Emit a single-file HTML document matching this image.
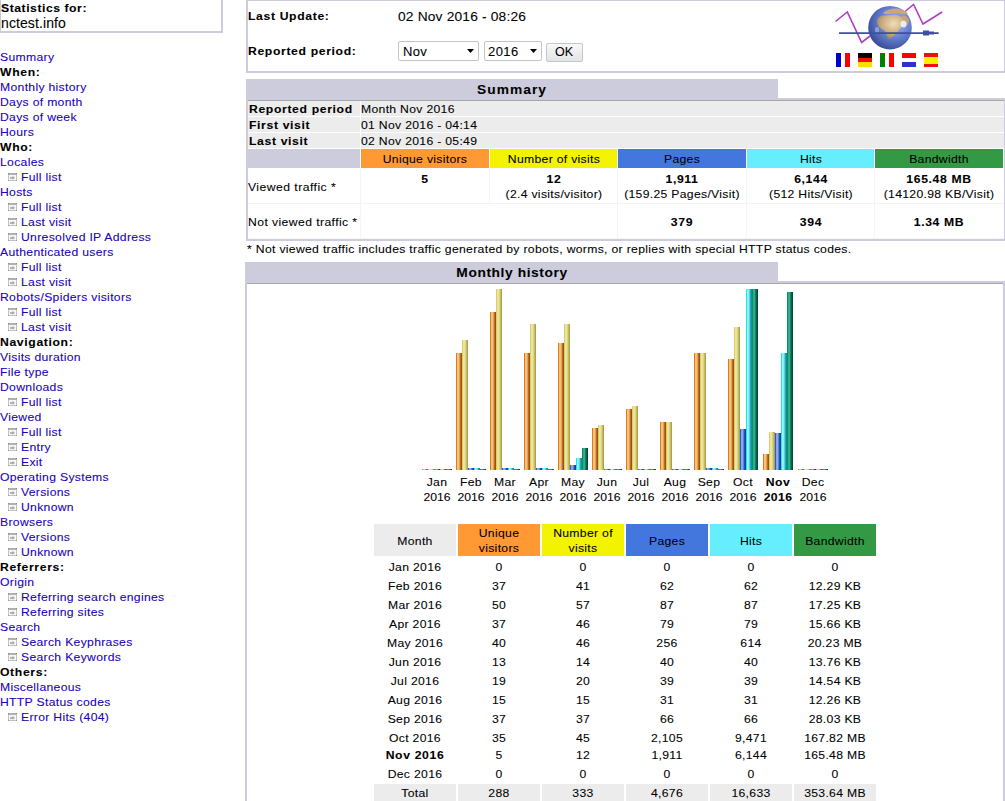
<!DOCTYPE html>
<html><head><meta charset="utf-8"><title>AWStats - nctest.info</title>
<style>
html,body{margin:0;padding:0;background:#fff;width:1005px;height:801px;overflow:hidden;position:relative}
.t{position:absolute;font-family:"Liberation Sans",sans-serif;white-space:nowrap;-webkit-text-stroke:0.08px currentColor}
.r{position:absolute}
.sel{border:1px solid #C4C4C4;border-radius:2px;background:#fff}
.btn{border:1px solid #C0C8D0;border-radius:2px;background:linear-gradient(#F8F8F8,#E4E4E4)}
</style></head><body>
<div class="r" style="left:0px;top:0px;width:1px;height:33px;background:#CCCCDD;"></div>
<div class="r" style="left:221px;top:0px;width:2px;height:33px;background:#CCCCDD;"></div>
<div class="r" style="left:0px;top:31px;width:223px;height:2px;background:#CCCCDD;"></div>
<div class="t" style="left:1px;top:3px;font-size:11.5px;line-height:11.5px;letter-spacing:0.509px;color:#000;font-weight:bold;transform:scaleX(1.06);transform-origin:0 0;">Statistics for:</div>
<div class="t" style="left:1px;top:16px;font-size:14px;line-height:14px;letter-spacing:0.100px;color:#000;">nctest.info</div>
<div class="t" style="left:0px;top:52px;font-size:11.5px;line-height:11.5px;letter-spacing:0.288px;color:#2000BB;transform:scaleX(1.06);transform-origin:0 0;">Summary</div>
<div class="t" style="left:0px;top:67px;font-size:11.5px;line-height:11.5px;letter-spacing:0.603px;color:#000;font-weight:bold;transform:scaleX(1.06);transform-origin:0 0;">When:</div>
<div class="t" style="left:0px;top:82px;font-size:11.5px;line-height:11.5px;letter-spacing:0.288px;color:#2000BB;transform:scaleX(1.06);transform-origin:0 0;">Monthly history</div>
<div class="t" style="left:0px;top:97px;font-size:11.5px;line-height:11.5px;letter-spacing:0.288px;color:#2000BB;transform:scaleX(1.06);transform-origin:0 0;">Days of month</div>
<div class="t" style="left:0px;top:112px;font-size:11.5px;line-height:11.5px;letter-spacing:0.288px;color:#2000BB;transform:scaleX(1.06);transform-origin:0 0;">Days of week</div>
<div class="t" style="left:0px;top:127px;font-size:11.5px;line-height:11.5px;letter-spacing:0.288px;color:#2000BB;transform:scaleX(1.06);transform-origin:0 0;">Hours</div>
<div class="t" style="left:0px;top:142px;font-size:11.5px;line-height:11.5px;letter-spacing:0.603px;color:#000;font-weight:bold;transform:scaleX(1.06);transform-origin:0 0;">Who:</div>
<div class="t" style="left:0px;top:157px;font-size:11.5px;line-height:11.5px;letter-spacing:0.288px;color:#2000BB;transform:scaleX(1.06);transform-origin:0 0;">Locales</div>
<svg class="r" style="left:8px;top:173px" width="9" height="8" viewBox="0 0 9 8"><rect x="0" y="0" width="9" height="8" fill="#C2C2C2"/><rect x="1" y="2" width="7" height="5" fill="#F8F8F8"/><rect x="0" y="0" width="9" height="2" fill="#B0B0B0"/><rect x="0" y="0" width="1" height="1" fill="#8C8C8C"/><rect x="8" y="0" width="1" height="1" fill="#8C8C8C"/><rect x="0" y="7" width="1" height="1" fill="#9C9C9C"/><rect x="8" y="7" width="1" height="1" fill="#9C9C9C"/><rect x="2" y="4" width="3" height="2" fill="#B4B4B4"/><path d="M4.5,2.8 L7,5 L4.5,6.8 Z" fill="#A8A8A8"/></svg>
<div class="t" style="left:21px;top:172px;font-size:11.5px;line-height:11.5px;letter-spacing:0.288px;color:#2000BB;transform:scaleX(1.06);transform-origin:0 0;">Full list</div>
<div class="t" style="left:0px;top:187px;font-size:11.5px;line-height:11.5px;letter-spacing:0.288px;color:#2000BB;transform:scaleX(1.06);transform-origin:0 0;">Hosts</div>
<svg class="r" style="left:8px;top:203px" width="9" height="8" viewBox="0 0 9 8"><rect x="0" y="0" width="9" height="8" fill="#C2C2C2"/><rect x="1" y="2" width="7" height="5" fill="#F8F8F8"/><rect x="0" y="0" width="9" height="2" fill="#B0B0B0"/><rect x="0" y="0" width="1" height="1" fill="#8C8C8C"/><rect x="8" y="0" width="1" height="1" fill="#8C8C8C"/><rect x="0" y="7" width="1" height="1" fill="#9C9C9C"/><rect x="8" y="7" width="1" height="1" fill="#9C9C9C"/><rect x="2" y="4" width="3" height="2" fill="#B4B4B4"/><path d="M4.5,2.8 L7,5 L4.5,6.8 Z" fill="#A8A8A8"/></svg>
<div class="t" style="left:21px;top:202px;font-size:11.5px;line-height:11.5px;letter-spacing:0.288px;color:#2000BB;transform:scaleX(1.06);transform-origin:0 0;">Full list</div>
<svg class="r" style="left:8px;top:218px" width="9" height="8" viewBox="0 0 9 8"><rect x="0" y="0" width="9" height="8" fill="#C2C2C2"/><rect x="1" y="2" width="7" height="5" fill="#F8F8F8"/><rect x="0" y="0" width="9" height="2" fill="#B0B0B0"/><rect x="0" y="0" width="1" height="1" fill="#8C8C8C"/><rect x="8" y="0" width="1" height="1" fill="#8C8C8C"/><rect x="0" y="7" width="1" height="1" fill="#9C9C9C"/><rect x="8" y="7" width="1" height="1" fill="#9C9C9C"/><rect x="2" y="4" width="3" height="2" fill="#B4B4B4"/><path d="M4.5,2.8 L7,5 L4.5,6.8 Z" fill="#A8A8A8"/></svg>
<div class="t" style="left:21px;top:217px;font-size:11.5px;line-height:11.5px;letter-spacing:0.288px;color:#2000BB;transform:scaleX(1.06);transform-origin:0 0;">Last visit</div>
<svg class="r" style="left:8px;top:233px" width="9" height="8" viewBox="0 0 9 8"><rect x="0" y="0" width="9" height="8" fill="#C2C2C2"/><rect x="1" y="2" width="7" height="5" fill="#F8F8F8"/><rect x="0" y="0" width="9" height="2" fill="#B0B0B0"/><rect x="0" y="0" width="1" height="1" fill="#8C8C8C"/><rect x="8" y="0" width="1" height="1" fill="#8C8C8C"/><rect x="0" y="7" width="1" height="1" fill="#9C9C9C"/><rect x="8" y="7" width="1" height="1" fill="#9C9C9C"/><rect x="2" y="4" width="3" height="2" fill="#B4B4B4"/><path d="M4.5,2.8 L7,5 L4.5,6.8 Z" fill="#A8A8A8"/></svg>
<div class="t" style="left:21px;top:232px;font-size:11.5px;line-height:11.5px;letter-spacing:0.288px;color:#2000BB;transform:scaleX(1.06);transform-origin:0 0;">Unresolved IP Address</div>
<div class="t" style="left:0px;top:247px;font-size:11.5px;line-height:11.5px;letter-spacing:0.288px;color:#2000BB;transform:scaleX(1.06);transform-origin:0 0;">Authenticated users</div>
<svg class="r" style="left:8px;top:263px" width="9" height="8" viewBox="0 0 9 8"><rect x="0" y="0" width="9" height="8" fill="#C2C2C2"/><rect x="1" y="2" width="7" height="5" fill="#F8F8F8"/><rect x="0" y="0" width="9" height="2" fill="#B0B0B0"/><rect x="0" y="0" width="1" height="1" fill="#8C8C8C"/><rect x="8" y="0" width="1" height="1" fill="#8C8C8C"/><rect x="0" y="7" width="1" height="1" fill="#9C9C9C"/><rect x="8" y="7" width="1" height="1" fill="#9C9C9C"/><rect x="2" y="4" width="3" height="2" fill="#B4B4B4"/><path d="M4.5,2.8 L7,5 L4.5,6.8 Z" fill="#A8A8A8"/></svg>
<div class="t" style="left:21px;top:262px;font-size:11.5px;line-height:11.5px;letter-spacing:0.288px;color:#2000BB;transform:scaleX(1.06);transform-origin:0 0;">Full list</div>
<svg class="r" style="left:8px;top:278px" width="9" height="8" viewBox="0 0 9 8"><rect x="0" y="0" width="9" height="8" fill="#C2C2C2"/><rect x="1" y="2" width="7" height="5" fill="#F8F8F8"/><rect x="0" y="0" width="9" height="2" fill="#B0B0B0"/><rect x="0" y="0" width="1" height="1" fill="#8C8C8C"/><rect x="8" y="0" width="1" height="1" fill="#8C8C8C"/><rect x="0" y="7" width="1" height="1" fill="#9C9C9C"/><rect x="8" y="7" width="1" height="1" fill="#9C9C9C"/><rect x="2" y="4" width="3" height="2" fill="#B4B4B4"/><path d="M4.5,2.8 L7,5 L4.5,6.8 Z" fill="#A8A8A8"/></svg>
<div class="t" style="left:21px;top:277px;font-size:11.5px;line-height:11.5px;letter-spacing:0.288px;color:#2000BB;transform:scaleX(1.06);transform-origin:0 0;">Last visit</div>
<div class="t" style="left:0px;top:292px;font-size:11.5px;line-height:11.5px;letter-spacing:0.288px;color:#2000BB;transform:scaleX(1.06);transform-origin:0 0;">Robots/Spiders visitors</div>
<svg class="r" style="left:8px;top:308px" width="9" height="8" viewBox="0 0 9 8"><rect x="0" y="0" width="9" height="8" fill="#C2C2C2"/><rect x="1" y="2" width="7" height="5" fill="#F8F8F8"/><rect x="0" y="0" width="9" height="2" fill="#B0B0B0"/><rect x="0" y="0" width="1" height="1" fill="#8C8C8C"/><rect x="8" y="0" width="1" height="1" fill="#8C8C8C"/><rect x="0" y="7" width="1" height="1" fill="#9C9C9C"/><rect x="8" y="7" width="1" height="1" fill="#9C9C9C"/><rect x="2" y="4" width="3" height="2" fill="#B4B4B4"/><path d="M4.5,2.8 L7,5 L4.5,6.8 Z" fill="#A8A8A8"/></svg>
<div class="t" style="left:21px;top:307px;font-size:11.5px;line-height:11.5px;letter-spacing:0.288px;color:#2000BB;transform:scaleX(1.06);transform-origin:0 0;">Full list</div>
<svg class="r" style="left:8px;top:323px" width="9" height="8" viewBox="0 0 9 8"><rect x="0" y="0" width="9" height="8" fill="#C2C2C2"/><rect x="1" y="2" width="7" height="5" fill="#F8F8F8"/><rect x="0" y="0" width="9" height="2" fill="#B0B0B0"/><rect x="0" y="0" width="1" height="1" fill="#8C8C8C"/><rect x="8" y="0" width="1" height="1" fill="#8C8C8C"/><rect x="0" y="7" width="1" height="1" fill="#9C9C9C"/><rect x="8" y="7" width="1" height="1" fill="#9C9C9C"/><rect x="2" y="4" width="3" height="2" fill="#B4B4B4"/><path d="M4.5,2.8 L7,5 L4.5,6.8 Z" fill="#A8A8A8"/></svg>
<div class="t" style="left:21px;top:322px;font-size:11.5px;line-height:11.5px;letter-spacing:0.288px;color:#2000BB;transform:scaleX(1.06);transform-origin:0 0;">Last visit</div>
<div class="t" style="left:0px;top:337px;font-size:11.5px;line-height:11.5px;letter-spacing:0.603px;color:#000;font-weight:bold;transform:scaleX(1.06);transform-origin:0 0;">Navigation:</div>
<div class="t" style="left:0px;top:352px;font-size:11.5px;line-height:11.5px;letter-spacing:0.288px;color:#2000BB;transform:scaleX(1.06);transform-origin:0 0;">Visits duration</div>
<div class="t" style="left:0px;top:367px;font-size:11.5px;line-height:11.5px;letter-spacing:0.288px;color:#2000BB;transform:scaleX(1.06);transform-origin:0 0;">File type</div>
<div class="t" style="left:0px;top:382px;font-size:11.5px;line-height:11.5px;letter-spacing:0.288px;color:#2000BB;transform:scaleX(1.06);transform-origin:0 0;">Downloads</div>
<svg class="r" style="left:8px;top:398px" width="9" height="8" viewBox="0 0 9 8"><rect x="0" y="0" width="9" height="8" fill="#C2C2C2"/><rect x="1" y="2" width="7" height="5" fill="#F8F8F8"/><rect x="0" y="0" width="9" height="2" fill="#B0B0B0"/><rect x="0" y="0" width="1" height="1" fill="#8C8C8C"/><rect x="8" y="0" width="1" height="1" fill="#8C8C8C"/><rect x="0" y="7" width="1" height="1" fill="#9C9C9C"/><rect x="8" y="7" width="1" height="1" fill="#9C9C9C"/><rect x="2" y="4" width="3" height="2" fill="#B4B4B4"/><path d="M4.5,2.8 L7,5 L4.5,6.8 Z" fill="#A8A8A8"/></svg>
<div class="t" style="left:21px;top:397px;font-size:11.5px;line-height:11.5px;letter-spacing:0.288px;color:#2000BB;transform:scaleX(1.06);transform-origin:0 0;">Full list</div>
<div class="t" style="left:0px;top:412px;font-size:11.5px;line-height:11.5px;letter-spacing:0.288px;color:#2000BB;transform:scaleX(1.06);transform-origin:0 0;">Viewed</div>
<svg class="r" style="left:8px;top:428px" width="9" height="8" viewBox="0 0 9 8"><rect x="0" y="0" width="9" height="8" fill="#C2C2C2"/><rect x="1" y="2" width="7" height="5" fill="#F8F8F8"/><rect x="0" y="0" width="9" height="2" fill="#B0B0B0"/><rect x="0" y="0" width="1" height="1" fill="#8C8C8C"/><rect x="8" y="0" width="1" height="1" fill="#8C8C8C"/><rect x="0" y="7" width="1" height="1" fill="#9C9C9C"/><rect x="8" y="7" width="1" height="1" fill="#9C9C9C"/><rect x="2" y="4" width="3" height="2" fill="#B4B4B4"/><path d="M4.5,2.8 L7,5 L4.5,6.8 Z" fill="#A8A8A8"/></svg>
<div class="t" style="left:21px;top:427px;font-size:11.5px;line-height:11.5px;letter-spacing:0.288px;color:#2000BB;transform:scaleX(1.06);transform-origin:0 0;">Full list</div>
<svg class="r" style="left:8px;top:443px" width="9" height="8" viewBox="0 0 9 8"><rect x="0" y="0" width="9" height="8" fill="#C2C2C2"/><rect x="1" y="2" width="7" height="5" fill="#F8F8F8"/><rect x="0" y="0" width="9" height="2" fill="#B0B0B0"/><rect x="0" y="0" width="1" height="1" fill="#8C8C8C"/><rect x="8" y="0" width="1" height="1" fill="#8C8C8C"/><rect x="0" y="7" width="1" height="1" fill="#9C9C9C"/><rect x="8" y="7" width="1" height="1" fill="#9C9C9C"/><rect x="2" y="4" width="3" height="2" fill="#B4B4B4"/><path d="M4.5,2.8 L7,5 L4.5,6.8 Z" fill="#A8A8A8"/></svg>
<div class="t" style="left:21px;top:442px;font-size:11.5px;line-height:11.5px;letter-spacing:0.288px;color:#2000BB;transform:scaleX(1.06);transform-origin:0 0;">Entry</div>
<svg class="r" style="left:8px;top:458px" width="9" height="8" viewBox="0 0 9 8"><rect x="0" y="0" width="9" height="8" fill="#C2C2C2"/><rect x="1" y="2" width="7" height="5" fill="#F8F8F8"/><rect x="0" y="0" width="9" height="2" fill="#B0B0B0"/><rect x="0" y="0" width="1" height="1" fill="#8C8C8C"/><rect x="8" y="0" width="1" height="1" fill="#8C8C8C"/><rect x="0" y="7" width="1" height="1" fill="#9C9C9C"/><rect x="8" y="7" width="1" height="1" fill="#9C9C9C"/><rect x="2" y="4" width="3" height="2" fill="#B4B4B4"/><path d="M4.5,2.8 L7,5 L4.5,6.8 Z" fill="#A8A8A8"/></svg>
<div class="t" style="left:21px;top:457px;font-size:11.5px;line-height:11.5px;letter-spacing:0.288px;color:#2000BB;transform:scaleX(1.06);transform-origin:0 0;">Exit</div>
<div class="t" style="left:0px;top:472px;font-size:11.5px;line-height:11.5px;letter-spacing:0.288px;color:#2000BB;transform:scaleX(1.06);transform-origin:0 0;">Operating Systems</div>
<svg class="r" style="left:8px;top:488px" width="9" height="8" viewBox="0 0 9 8"><rect x="0" y="0" width="9" height="8" fill="#C2C2C2"/><rect x="1" y="2" width="7" height="5" fill="#F8F8F8"/><rect x="0" y="0" width="9" height="2" fill="#B0B0B0"/><rect x="0" y="0" width="1" height="1" fill="#8C8C8C"/><rect x="8" y="0" width="1" height="1" fill="#8C8C8C"/><rect x="0" y="7" width="1" height="1" fill="#9C9C9C"/><rect x="8" y="7" width="1" height="1" fill="#9C9C9C"/><rect x="2" y="4" width="3" height="2" fill="#B4B4B4"/><path d="M4.5,2.8 L7,5 L4.5,6.8 Z" fill="#A8A8A8"/></svg>
<div class="t" style="left:21px;top:487px;font-size:11.5px;line-height:11.5px;letter-spacing:0.288px;color:#2000BB;transform:scaleX(1.06);transform-origin:0 0;">Versions</div>
<svg class="r" style="left:8px;top:503px" width="9" height="8" viewBox="0 0 9 8"><rect x="0" y="0" width="9" height="8" fill="#C2C2C2"/><rect x="1" y="2" width="7" height="5" fill="#F8F8F8"/><rect x="0" y="0" width="9" height="2" fill="#B0B0B0"/><rect x="0" y="0" width="1" height="1" fill="#8C8C8C"/><rect x="8" y="0" width="1" height="1" fill="#8C8C8C"/><rect x="0" y="7" width="1" height="1" fill="#9C9C9C"/><rect x="8" y="7" width="1" height="1" fill="#9C9C9C"/><rect x="2" y="4" width="3" height="2" fill="#B4B4B4"/><path d="M4.5,2.8 L7,5 L4.5,6.8 Z" fill="#A8A8A8"/></svg>
<div class="t" style="left:21px;top:502px;font-size:11.5px;line-height:11.5px;letter-spacing:0.288px;color:#2000BB;transform:scaleX(1.06);transform-origin:0 0;">Unknown</div>
<div class="t" style="left:0px;top:517px;font-size:11.5px;line-height:11.5px;letter-spacing:0.288px;color:#2000BB;transform:scaleX(1.06);transform-origin:0 0;">Browsers</div>
<svg class="r" style="left:8px;top:533px" width="9" height="8" viewBox="0 0 9 8"><rect x="0" y="0" width="9" height="8" fill="#C2C2C2"/><rect x="1" y="2" width="7" height="5" fill="#F8F8F8"/><rect x="0" y="0" width="9" height="2" fill="#B0B0B0"/><rect x="0" y="0" width="1" height="1" fill="#8C8C8C"/><rect x="8" y="0" width="1" height="1" fill="#8C8C8C"/><rect x="0" y="7" width="1" height="1" fill="#9C9C9C"/><rect x="8" y="7" width="1" height="1" fill="#9C9C9C"/><rect x="2" y="4" width="3" height="2" fill="#B4B4B4"/><path d="M4.5,2.8 L7,5 L4.5,6.8 Z" fill="#A8A8A8"/></svg>
<div class="t" style="left:21px;top:532px;font-size:11.5px;line-height:11.5px;letter-spacing:0.288px;color:#2000BB;transform:scaleX(1.06);transform-origin:0 0;">Versions</div>
<svg class="r" style="left:8px;top:548px" width="9" height="8" viewBox="0 0 9 8"><rect x="0" y="0" width="9" height="8" fill="#C2C2C2"/><rect x="1" y="2" width="7" height="5" fill="#F8F8F8"/><rect x="0" y="0" width="9" height="2" fill="#B0B0B0"/><rect x="0" y="0" width="1" height="1" fill="#8C8C8C"/><rect x="8" y="0" width="1" height="1" fill="#8C8C8C"/><rect x="0" y="7" width="1" height="1" fill="#9C9C9C"/><rect x="8" y="7" width="1" height="1" fill="#9C9C9C"/><rect x="2" y="4" width="3" height="2" fill="#B4B4B4"/><path d="M4.5,2.8 L7,5 L4.5,6.8 Z" fill="#A8A8A8"/></svg>
<div class="t" style="left:21px;top:547px;font-size:11.5px;line-height:11.5px;letter-spacing:0.288px;color:#2000BB;transform:scaleX(1.06);transform-origin:0 0;">Unknown</div>
<div class="t" style="left:0px;top:562px;font-size:11.5px;line-height:11.5px;letter-spacing:0.603px;color:#000;font-weight:bold;transform:scaleX(1.06);transform-origin:0 0;">Referrers:</div>
<div class="t" style="left:0px;top:577px;font-size:11.5px;line-height:11.5px;letter-spacing:0.288px;color:#2000BB;transform:scaleX(1.06);transform-origin:0 0;">Origin</div>
<svg class="r" style="left:8px;top:593px" width="9" height="8" viewBox="0 0 9 8"><rect x="0" y="0" width="9" height="8" fill="#C2C2C2"/><rect x="1" y="2" width="7" height="5" fill="#F8F8F8"/><rect x="0" y="0" width="9" height="2" fill="#B0B0B0"/><rect x="0" y="0" width="1" height="1" fill="#8C8C8C"/><rect x="8" y="0" width="1" height="1" fill="#8C8C8C"/><rect x="0" y="7" width="1" height="1" fill="#9C9C9C"/><rect x="8" y="7" width="1" height="1" fill="#9C9C9C"/><rect x="2" y="4" width="3" height="2" fill="#B4B4B4"/><path d="M4.5,2.8 L7,5 L4.5,6.8 Z" fill="#A8A8A8"/></svg>
<div class="t" style="left:21px;top:592px;font-size:11.5px;line-height:11.5px;letter-spacing:0.288px;color:#2000BB;transform:scaleX(1.06);transform-origin:0 0;">Referring search engines</div>
<svg class="r" style="left:8px;top:608px" width="9" height="8" viewBox="0 0 9 8"><rect x="0" y="0" width="9" height="8" fill="#C2C2C2"/><rect x="1" y="2" width="7" height="5" fill="#F8F8F8"/><rect x="0" y="0" width="9" height="2" fill="#B0B0B0"/><rect x="0" y="0" width="1" height="1" fill="#8C8C8C"/><rect x="8" y="0" width="1" height="1" fill="#8C8C8C"/><rect x="0" y="7" width="1" height="1" fill="#9C9C9C"/><rect x="8" y="7" width="1" height="1" fill="#9C9C9C"/><rect x="2" y="4" width="3" height="2" fill="#B4B4B4"/><path d="M4.5,2.8 L7,5 L4.5,6.8 Z" fill="#A8A8A8"/></svg>
<div class="t" style="left:21px;top:607px;font-size:11.5px;line-height:11.5px;letter-spacing:0.288px;color:#2000BB;transform:scaleX(1.06);transform-origin:0 0;">Referring sites</div>
<div class="t" style="left:0px;top:622px;font-size:11.5px;line-height:11.5px;letter-spacing:0.288px;color:#2000BB;transform:scaleX(1.06);transform-origin:0 0;">Search</div>
<svg class="r" style="left:8px;top:638px" width="9" height="8" viewBox="0 0 9 8"><rect x="0" y="0" width="9" height="8" fill="#C2C2C2"/><rect x="1" y="2" width="7" height="5" fill="#F8F8F8"/><rect x="0" y="0" width="9" height="2" fill="#B0B0B0"/><rect x="0" y="0" width="1" height="1" fill="#8C8C8C"/><rect x="8" y="0" width="1" height="1" fill="#8C8C8C"/><rect x="0" y="7" width="1" height="1" fill="#9C9C9C"/><rect x="8" y="7" width="1" height="1" fill="#9C9C9C"/><rect x="2" y="4" width="3" height="2" fill="#B4B4B4"/><path d="M4.5,2.8 L7,5 L4.5,6.8 Z" fill="#A8A8A8"/></svg>
<div class="t" style="left:21px;top:637px;font-size:11.5px;line-height:11.5px;letter-spacing:0.288px;color:#2000BB;transform:scaleX(1.06);transform-origin:0 0;">Search Keyphrases</div>
<svg class="r" style="left:8px;top:653px" width="9" height="8" viewBox="0 0 9 8"><rect x="0" y="0" width="9" height="8" fill="#C2C2C2"/><rect x="1" y="2" width="7" height="5" fill="#F8F8F8"/><rect x="0" y="0" width="9" height="2" fill="#B0B0B0"/><rect x="0" y="0" width="1" height="1" fill="#8C8C8C"/><rect x="8" y="0" width="1" height="1" fill="#8C8C8C"/><rect x="0" y="7" width="1" height="1" fill="#9C9C9C"/><rect x="8" y="7" width="1" height="1" fill="#9C9C9C"/><rect x="2" y="4" width="3" height="2" fill="#B4B4B4"/><path d="M4.5,2.8 L7,5 L4.5,6.8 Z" fill="#A8A8A8"/></svg>
<div class="t" style="left:21px;top:652px;font-size:11.5px;line-height:11.5px;letter-spacing:0.288px;color:#2000BB;transform:scaleX(1.06);transform-origin:0 0;">Search Keywords</div>
<div class="t" style="left:0px;top:667px;font-size:11.5px;line-height:11.5px;letter-spacing:0.603px;color:#000;font-weight:bold;transform:scaleX(1.06);transform-origin:0 0;">Others:</div>
<div class="t" style="left:0px;top:682px;font-size:11.5px;line-height:11.5px;letter-spacing:0.288px;color:#2000BB;transform:scaleX(1.06);transform-origin:0 0;">Miscellaneous</div>
<div class="t" style="left:0px;top:697px;font-size:11.5px;line-height:11.5px;letter-spacing:0.288px;color:#2000BB;transform:scaleX(1.06);transform-origin:0 0;">HTTP Status codes</div>
<svg class="r" style="left:8px;top:713px" width="9" height="8" viewBox="0 0 9 8"><rect x="0" y="0" width="9" height="8" fill="#C2C2C2"/><rect x="1" y="2" width="7" height="5" fill="#F8F8F8"/><rect x="0" y="0" width="9" height="2" fill="#B0B0B0"/><rect x="0" y="0" width="1" height="1" fill="#8C8C8C"/><rect x="8" y="0" width="1" height="1" fill="#8C8C8C"/><rect x="0" y="7" width="1" height="1" fill="#9C9C9C"/><rect x="8" y="7" width="1" height="1" fill="#9C9C9C"/><rect x="2" y="4" width="3" height="2" fill="#B4B4B4"/><path d="M4.5,2.8 L7,5 L4.5,6.8 Z" fill="#A8A8A8"/></svg>
<div class="t" style="left:21px;top:712px;font-size:11.5px;line-height:11.5px;letter-spacing:0.288px;color:#2000BB;transform:scaleX(1.06);transform-origin:0 0;">Error Hits (404)</div>
<div class="r" style="left:246px;top:0px;width:2px;height:73px;background:#CCCCDD;"></div>
<div class="r" style="left:246px;top:0px;width:760px;height:1px;background:#CCCCDD;"></div>
<div class="r" style="left:1004px;top:0px;width:2px;height:73px;background:#CCCCDD;"></div>
<div class="r" style="left:246px;top:71px;width:760px;height:2px;background:#CCCCDD;"></div>
<div class="t" style="left:248px;top:11px;font-size:11.5px;line-height:11.5px;letter-spacing:0.603px;color:#000;font-weight:bold;transform:scaleX(1.06);transform-origin:0 0;">Last Update:</div>
<div class="t" style="left:398px;top:10px;font-size:13px;line-height:13px;letter-spacing:0.160px;color:#000;transform:scaleX(1.06);transform-origin:0 0;">02 Nov 2016 - 08:26</div>
<div class="t" style="left:248px;top:46px;font-size:11.5px;line-height:11.5px;letter-spacing:0.603px;color:#000;font-weight:bold;transform:scaleX(1.06);transform-origin:0 0;">Reported period:</div>
<div class="r sel" style="left:398px;top:41px;width:79px;height:18px;"></div>
<div class="t" style="left:403px;top:45px;font-size:13px;line-height:13px;letter-spacing:0.300px;color:#000;">Nov</div>
<svg class="r" style="left:467px;top:49px" width="7" height="4"><path d="M0 0H7L3.5 4Z" fill="#000"/></svg>
<div class="r sel" style="left:484px;top:41px;width:56px;height:18px;"></div>
<div class="t" style="left:488px;top:45px;font-size:13px;line-height:13px;letter-spacing:0.450px;color:#000;">2016</div>
<svg class="r" style="left:530px;top:49px" width="7" height="4"><path d="M0 0H7L3.5 4Z" fill="#000"/></svg>
<div class="r btn" style="left:546px;top:43px;width:35px;height:17px;"></div>
<div class="t" style="left:544.0px;top:46px;font-size:12.5px;line-height:12.5px;letter-spacing:0.000px;color:#000;width:40px;text-align:center;">OK</div>
<svg class="r" style="left:830px;top:0px" width="120" height="72" viewBox="0 0 120 72">
<defs>
<radialGradient id="gl" cx="0.62" cy="0.38" r="0.7">
<stop offset="0" stop-color="#E8F0FF"/><stop offset="0.18" stop-color="#8FA8E8"/><stop offset="0.6" stop-color="#5A74C8"/><stop offset="1" stop-color="#34468F"/>
</radialGradient>
<radialGradient id="gl2" cx="0.55" cy="0.35" r="0.7">
<stop offset="0" stop-color="#F0DDB8"/><stop offset="0.6" stop-color="#C8A878"/><stop offset="1" stop-color="#907050"/>
</radialGradient>
</defs>
<polyline points="5.5,21.5 17.3,12 31.6,42.4 40,36" fill="none" stroke="#B040C0" stroke-width="1.6"/>
<polyline points="75,11.5 83.6,4.5 93,24 112.2,12" fill="none" stroke="#B040C0" stroke-width="1.6"/>
<circle cx="60" cy="27.7" r="21.8" fill="url(#gl)"/>
<path d="M47,22 C47,18 50,15.5 54,15.5 L66,15 C70,15.5 72,18 74,19 C77,20 78,22 76,24 C73,25 71,27 69,30 C67,33 64,36 59,40 C57,37 57,33 55,31 C52,29 48,28 47,22 Z" fill="url(#gl2)"/>
<path d="M53,13 C56,10 61,8.5 67,8.5 C72,9 76,11 78,14 L74,14.5 C70,13 64,13.5 58,14 C56,14 54,14 53,13 Z" fill="#C8A878"/>
<path d="M72,15.5 C75,15 78,17 79,20 C79,23 77,26 75,26 C73,24 72,19 72,15.5 Z" fill="#C4A47A"/>
<ellipse cx="73.5" cy="24" rx="3" ry="3.5" fill="#F4F8FF" opacity="0.85"/>
<ellipse cx="47" cy="30" rx="2" ry="3" fill="#A8B4D8" opacity="0.7"/>
<line x1="9" y1="33.1" x2="108.7" y2="33.1" stroke="#4050A0" stroke-width="1.6"/>
<rect x="93" y="30.5" width="6" height="5" fill="#4050A0"/>
<rect x="99" y="31.5" width="5" height="3" fill="#4050A0"/>
</svg>
<div class="r" style="left:836px;top:53px;width:5px;height:14px;background:#0000CC;"></div>
<div class="r" style="left:841px;top:53px;width:4px;height:14px;background:#FFFFFF;"></div>
<div class="r" style="left:845px;top:53px;width:5px;height:14px;background:#FF0000;"></div>
<div class="r" style="left:880px;top:53px;width:5px;height:14px;background:#008000;"></div>
<div class="r" style="left:885px;top:53px;width:4px;height:14px;background:#FFFFFF;"></div>
<div class="r" style="left:889px;top:53px;width:5px;height:14px;background:#FF0000;"></div>
<div class="r" style="left:858px;top:53px;width:14px;height:5px;background:#100000;"></div>
<div class="r" style="left:858px;top:58px;width:14px;height:5px;background:#EE1010;"></div>
<div class="r" style="left:858px;top:62px;width:14px;height:5px;background:#FFDD00;"></div>
<div class="r" style="left:902px;top:53px;width:14px;height:5px;background:#FF0000;"></div>
<div class="r" style="left:902px;top:58px;width:14px;height:4px;background:#FFFFFF;"></div>
<div class="r" style="left:902px;top:62px;width:14px;height:5px;background:#3030CC;"></div>
<div class="r" style="left:924px;top:53px;width:14px;height:4px;background:#EE1010;"></div>
<div class="r" style="left:924px;top:57px;width:14px;height:7px;background:#FFEE00;"></div>
<div class="r" style="left:924px;top:64px;width:14px;height:3px;background:#EE1010;"></div>
<div class="r" style="left:246px;top:79px;width:532px;height:162px;background:#CCCCDD;"></div>
<div class="r" style="left:246px;top:98px;width:760px;height:143px;background:#CCCCDD;"></div>
<div class="t" style="left:411.5px;top:83px;font-size:13px;line-height:13px;letter-spacing:0.950px;color:#000;font-weight:bold;width:200px;text-align:center;transform:scaleX(1.06);transform-origin:50% 0;">Summary</div>
<div class="r" style="left:248px;top:100px;width:756px;height:139px;background:#FFFFFF;"></div>
<div class="r" style="left:248px;top:100px;width:756px;height:1px;background:#A8A8A8;"></div>
<div class="r" style="left:248px;top:101px;width:756px;height:15px;background:#ECECEC;"></div>
<div class="r" style="left:248px;top:117px;width:756px;height:15px;background:#ECECEC;"></div>
<div class="r" style="left:248px;top:133px;width:756px;height:15px;background:#ECECEC;"></div>
<div class="r" style="left:360px;top:101px;width:1px;height:47px;background:#FFFFFF;"></div>
<div class="r" style="left:248px;top:149px;width:112px;height:19px;background:#CCCCDD;"></div>
<div class="r" style="left:361px;top:149px;width:128px;height:19px;background:#FF9933;"></div>
<div class="t" style="left:325.0px;top:154px;font-size:11.5px;line-height:11.5px;letter-spacing:0.288px;color:#000;width:200px;text-align:center;transform:scaleX(1.06);transform-origin:50% 0;">Unique visitors</div>
<div class="r" style="left:490px;top:149px;width:127px;height:19px;background:#F3F300;"></div>
<div class="t" style="left:453.5px;top:154px;font-size:11.5px;line-height:11.5px;letter-spacing:0.288px;color:#000;width:200px;text-align:center;transform:scaleX(1.06);transform-origin:50% 0;">Number of visits</div>
<div class="r" style="left:618px;top:149px;width:128px;height:19px;background:#4477DD;"></div>
<div class="t" style="left:582.0px;top:154px;font-size:11.5px;line-height:11.5px;letter-spacing:0.288px;color:#000;width:200px;text-align:center;transform:scaleX(1.06);transform-origin:50% 0;">Pages</div>
<div class="r" style="left:747px;top:149px;width:127px;height:19px;background:#66EEFF;"></div>
<div class="t" style="left:710.5px;top:154px;font-size:11.5px;line-height:11.5px;letter-spacing:0.288px;color:#000;width:200px;text-align:center;transform:scaleX(1.06);transform-origin:50% 0;">Hits</div>
<div class="r" style="left:875px;top:149px;width:128px;height:19px;background:#339944;"></div>
<div class="t" style="left:839.0px;top:154px;font-size:11.5px;line-height:11.5px;letter-spacing:0.288px;color:#000;width:200px;text-align:center;transform:scaleX(1.06);transform-origin:50% 0;">Bandwidth</div>
<div class="r" style="left:248px;top:203px;width:756px;height:1px;background:#F2F2F2;"></div>
<div class="r" style="left:248px;top:238px;width:756px;height:1px;background:#F6F6F6;"></div>
<div class="r" style="left:360px;top:168px;width:1px;height:70px;background:#F4F4F4;"></div>
<div class="r" style="left:617px;top:168px;width:1px;height:70px;background:#F4F4F4;"></div>
<div class="r" style="left:746px;top:168px;width:1px;height:70px;background:#F4F4F4;"></div>
<div class="r" style="left:874px;top:168px;width:1px;height:70px;background:#F4F4F4;"></div>
<div class="r" style="left:489px;top:168px;width:1px;height:35px;background:#F4F4F4;"></div>
<div class="t" style="left:249px;top:104px;font-size:11.5px;line-height:11.5px;letter-spacing:0.603px;color:#000;font-weight:bold;transform:scaleX(1.06);transform-origin:0 0;">Reported period</div>
<div class="t" style="left:361px;top:104px;font-size:11.5px;line-height:11.5px;letter-spacing:0.288px;color:#000;transform:scaleX(1.06);transform-origin:0 0;">Month Nov 2016</div>
<div class="t" style="left:249px;top:120px;font-size:11.5px;line-height:11.5px;letter-spacing:0.603px;color:#000;font-weight:bold;transform:scaleX(1.06);transform-origin:0 0;">First visit</div>
<div class="t" style="left:361px;top:120px;font-size:11.5px;line-height:11.5px;letter-spacing:0.288px;color:#000;transform:scaleX(1.06);transform-origin:0 0;">01 Nov 2016 - 04:14</div>
<div class="t" style="left:249px;top:136px;font-size:11.5px;line-height:11.5px;letter-spacing:0.603px;color:#000;font-weight:bold;transform:scaleX(1.06);transform-origin:0 0;">Last visit</div>
<div class="t" style="left:361px;top:136px;font-size:11.5px;line-height:11.5px;letter-spacing:0.288px;color:#000;transform:scaleX(1.06);transform-origin:0 0;">02 Nov 2016 - 05:49</div>
<div class="t" style="left:248px;top:182px;font-size:11.5px;line-height:11.5px;letter-spacing:0.429px;color:#000;transform:scaleX(1.06);transform-origin:0 0;">Viewed traffic *</div>
<div class="t" style="left:248px;top:217px;font-size:11.5px;line-height:11.5px;letter-spacing:0.382px;color:#000;transform:scaleX(1.06);transform-origin:0 0;">Not viewed traffic *</div>
<div class="t" style="left:325.0px;top:174px;font-size:11.5px;line-height:11.5px;letter-spacing:0.603px;color:#000;font-weight:bold;width:200px;text-align:center;transform:scaleX(1.06);transform-origin:50% 0;">5</div>
<div class="t" style="left:453.5px;top:174px;font-size:11.5px;line-height:11.5px;letter-spacing:0.603px;color:#000;font-weight:bold;width:200px;text-align:center;transform:scaleX(1.06);transform-origin:50% 0;">12</div>
<div class="t" style="left:453.5px;top:189px;font-size:11.5px;line-height:11.5px;letter-spacing:0.288px;color:#000;width:200px;text-align:center;transform:scaleX(1.06);transform-origin:50% 0;">(2.4 visits/visitor)</div>
<div class="t" style="left:582.0px;top:174px;font-size:11.5px;line-height:11.5px;letter-spacing:0.603px;color:#000;font-weight:bold;width:200px;text-align:center;transform:scaleX(1.06);transform-origin:50% 0;">1,911</div>
<div class="t" style="left:582.0px;top:189px;font-size:11.5px;line-height:11.5px;letter-spacing:0.288px;color:#000;width:200px;text-align:center;transform:scaleX(1.06);transform-origin:50% 0;">(159.25 Pages/Visit)</div>
<div class="t" style="left:710.5px;top:174px;font-size:11.5px;line-height:11.5px;letter-spacing:0.603px;color:#000;font-weight:bold;width:200px;text-align:center;transform:scaleX(1.06);transform-origin:50% 0;">6,144</div>
<div class="t" style="left:710.5px;top:189px;font-size:11.5px;line-height:11.5px;letter-spacing:0.288px;color:#000;width:200px;text-align:center;transform:scaleX(1.06);transform-origin:50% 0;">(512 Hits/Visit)</div>
<div class="t" style="left:839.0px;top:174px;font-size:11.5px;line-height:11.5px;letter-spacing:0.603px;color:#000;font-weight:bold;width:200px;text-align:center;transform:scaleX(1.06);transform-origin:50% 0;">165.48 MB</div>
<div class="t" style="left:839.0px;top:189px;font-size:11.5px;line-height:11.5px;letter-spacing:0.288px;color:#000;width:200px;text-align:center;transform:scaleX(1.06);transform-origin:50% 0;">(14120.98 KB/Visit)</div>
<div class="t" style="left:582.0px;top:217px;font-size:11.5px;line-height:11.5px;letter-spacing:0.603px;color:#000;font-weight:bold;width:200px;text-align:center;transform:scaleX(1.06);transform-origin:50% 0;">379</div>
<div class="t" style="left:710.5px;top:217px;font-size:11.5px;line-height:11.5px;letter-spacing:0.603px;color:#000;font-weight:bold;width:200px;text-align:center;transform:scaleX(1.06);transform-origin:50% 0;">394</div>
<div class="t" style="left:839.0px;top:217px;font-size:11.5px;line-height:11.5px;letter-spacing:0.603px;color:#000;font-weight:bold;width:200px;text-align:center;transform:scaleX(1.06);transform-origin:50% 0;">1.34 MB</div>
<div class="t" style="left:247px;top:244px;font-size:11.5px;line-height:11.5px;letter-spacing:0.297px;color:#000;transform:scaleX(1.06);transform-origin:0 0;">* Not viewed traffic includes traffic generated by robots, worms, or replies with special HTTP status codes.</div>
<div class="r" style="left:245px;top:262px;width:533px;height:540px;background:#CCCCDD;"></div>
<div class="r" style="left:245px;top:281px;width:761px;height:521px;background:#CCCCDD;"></div>
<div class="t" style="left:361.5px;top:266px;font-size:13px;line-height:13px;letter-spacing:0.550px;color:#000;font-weight:bold;width:300px;text-align:center;transform:scaleX(1.06);transform-origin:50% 0;">Monthly history</div>
<div class="r" style="left:247px;top:283px;width:756px;height:519px;background:#FFFFFF;"></div>
<div class="r" style="left:247px;top:283px;width:756px;height:1px;background:#A8A8A8;"></div>
<div class="r" style="left:422px;top:469px;width:6px;height:1px;background:linear-gradient(to right,#D88018 0.00%,#D88018 16.67%,#FFC070 16.67%,#FFC070 33.33%,#F0C088 33.33%,#F0C088 50.00%,#E0A060 50.00%,#E0A060 66.67%,#B87020 66.67%,#B87020 83.33%,#A05008 83.33%,#A05008 100.00%)"></div>
<div class="r" style="left:428px;top:469px;width:6px;height:1px;background:linear-gradient(to right,#D8D060 0.00%,#D8D060 16.67%,#F0E498 16.67%,#F0E498 33.33%,#E8E4A8 33.33%,#E8E4A8 50.00%,#D8D488 50.00%,#D8D488 66.67%,#C8BC60 66.67%,#C8BC60 83.33%,#B0A048 83.33%,#B0A048 100.00%)"></div>
<div class="r" style="left:434px;top:469px;width:6px;height:1px;background:linear-gradient(to right,#2060E0 0.00%,#2060E0 16.67%,#80A8F8 16.67%,#80A8F8 33.33%,#90A8E8 33.33%,#90A8E8 50.00%,#6080D8 50.00%,#6080D8 66.67%,#2050B8 66.67%,#2050B8 83.33%,#1040A0 83.33%,#1040A0 100.00%)"></div>
<div class="r" style="left:440px;top:469px;width:6px;height:1px;background:linear-gradient(to right,#20E8E0 0.00%,#20E8E0 16.67%,#80FFFF 16.67%,#80FFFF 33.33%,#98E8F0 33.33%,#98E8F0 50.00%,#60D0E0 50.00%,#60D0E0 66.67%,#20A8B8 66.67%,#20A8B8 83.33%,#109098 83.33%,#109098 100.00%)"></div>
<div class="r" style="left:446px;top:469px;width:6px;height:1px;background:linear-gradient(to right,#109050 0.00%,#109050 16.67%,#20B090 16.67%,#20B090 33.33%,#40A890 33.33%,#40A890 50.00%,#108070 50.00%,#108070 66.67%,#106040 66.67%,#106040 83.33%,#005030 83.33%,#005030 100.00%)"></div>
<div class="t" style="left:407.0px;top:477px;font-size:11.5px;line-height:11.5px;letter-spacing:0.288px;color:#000;width:60px;text-align:center;transform:scaleX(1.06);transform-origin:50% 0;">Jan</div>
<div class="t" style="left:407.0px;top:492px;font-size:11.5px;line-height:11.5px;letter-spacing:0.005px;color:#000;width:60px;text-align:center;transform:scaleX(1.06);transform-origin:50% 0;">2016</div>
<div class="r" style="left:456px;top:353px;width:6px;height:117px;background:linear-gradient(to right,#D88018 0.00%,#D88018 16.67%,#FFC070 16.67%,#FFC070 33.33%,#F0C088 33.33%,#F0C088 50.00%,#E0A060 50.00%,#E0A060 66.67%,#B87020 66.67%,#B87020 83.33%,#A05008 83.33%,#A05008 100.00%)"></div>
<div class="r" style="left:462px;top:340px;width:6px;height:130px;background:linear-gradient(to right,#D8D060 0.00%,#D8D060 16.67%,#F0E498 16.67%,#F0E498 33.33%,#E8E4A8 33.33%,#E8E4A8 50.00%,#D8D488 50.00%,#D8D488 66.67%,#C8BC60 66.67%,#C8BC60 83.33%,#B0A048 83.33%,#B0A048 100.00%)"></div>
<div class="r" style="left:468px;top:468px;width:6px;height:2px;background:linear-gradient(to right,#2060E0 0.00%,#2060E0 16.67%,#80A8F8 16.67%,#80A8F8 33.33%,#90A8E8 33.33%,#90A8E8 50.00%,#6080D8 50.00%,#6080D8 66.67%,#2050B8 66.67%,#2050B8 83.33%,#1040A0 83.33%,#1040A0 100.00%)"></div>
<div class="r" style="left:474px;top:468px;width:6px;height:2px;background:linear-gradient(to right,#20E8E0 0.00%,#20E8E0 16.67%,#80FFFF 16.67%,#80FFFF 33.33%,#98E8F0 33.33%,#98E8F0 50.00%,#60D0E0 50.00%,#60D0E0 66.67%,#20A8B8 66.67%,#20A8B8 83.33%,#109098 83.33%,#109098 100.00%)"></div>
<div class="r" style="left:480px;top:469px;width:6px;height:1px;background:linear-gradient(to right,#109050 0.00%,#109050 16.67%,#20B090 16.67%,#20B090 33.33%,#40A890 33.33%,#40A890 50.00%,#108070 50.00%,#108070 66.67%,#106040 66.67%,#106040 83.33%,#005030 83.33%,#005030 100.00%)"></div>
<div class="t" style="left:441.0px;top:477px;font-size:11.5px;line-height:11.5px;letter-spacing:0.288px;color:#000;width:60px;text-align:center;transform:scaleX(1.06);transform-origin:50% 0;">Feb</div>
<div class="t" style="left:441.0px;top:492px;font-size:11.5px;line-height:11.5px;letter-spacing:0.005px;color:#000;width:60px;text-align:center;transform:scaleX(1.06);transform-origin:50% 0;">2016</div>
<div class="r" style="left:490px;top:312px;width:6px;height:158px;background:linear-gradient(to right,#D88018 0.00%,#D88018 16.67%,#FFC070 16.67%,#FFC070 33.33%,#F0C088 33.33%,#F0C088 50.00%,#E0A060 50.00%,#E0A060 66.67%,#B87020 66.67%,#B87020 83.33%,#A05008 83.33%,#A05008 100.00%)"></div>
<div class="r" style="left:496px;top:289px;width:6px;height:181px;background:linear-gradient(to right,#D8D060 0.00%,#D8D060 16.67%,#F0E498 16.67%,#F0E498 33.33%,#E8E4A8 33.33%,#E8E4A8 50.00%,#D8D488 50.00%,#D8D488 66.67%,#C8BC60 66.67%,#C8BC60 83.33%,#B0A048 83.33%,#B0A048 100.00%)"></div>
<div class="r" style="left:502px;top:468px;width:6px;height:2px;background:linear-gradient(to right,#2060E0 0.00%,#2060E0 16.67%,#80A8F8 16.67%,#80A8F8 33.33%,#90A8E8 33.33%,#90A8E8 50.00%,#6080D8 50.00%,#6080D8 66.67%,#2050B8 66.67%,#2050B8 83.33%,#1040A0 83.33%,#1040A0 100.00%)"></div>
<div class="r" style="left:508px;top:468px;width:6px;height:2px;background:linear-gradient(to right,#20E8E0 0.00%,#20E8E0 16.67%,#80FFFF 16.67%,#80FFFF 33.33%,#98E8F0 33.33%,#98E8F0 50.00%,#60D0E0 50.00%,#60D0E0 66.67%,#20A8B8 66.67%,#20A8B8 83.33%,#109098 83.33%,#109098 100.00%)"></div>
<div class="r" style="left:514px;top:469px;width:6px;height:1px;background:linear-gradient(to right,#109050 0.00%,#109050 16.67%,#20B090 16.67%,#20B090 33.33%,#40A890 33.33%,#40A890 50.00%,#108070 50.00%,#108070 66.67%,#106040 66.67%,#106040 83.33%,#005030 83.33%,#005030 100.00%)"></div>
<div class="t" style="left:475.0px;top:477px;font-size:11.5px;line-height:11.5px;letter-spacing:0.288px;color:#000;width:60px;text-align:center;transform:scaleX(1.06);transform-origin:50% 0;">Mar</div>
<div class="t" style="left:475.0px;top:492px;font-size:11.5px;line-height:11.5px;letter-spacing:0.005px;color:#000;width:60px;text-align:center;transform:scaleX(1.06);transform-origin:50% 0;">2016</div>
<div class="r" style="left:524px;top:353px;width:6px;height:117px;background:linear-gradient(to right,#D88018 0.00%,#D88018 16.67%,#FFC070 16.67%,#FFC070 33.33%,#F0C088 33.33%,#F0C088 50.00%,#E0A060 50.00%,#E0A060 66.67%,#B87020 66.67%,#B87020 83.33%,#A05008 83.33%,#A05008 100.00%)"></div>
<div class="r" style="left:530px;top:324px;width:6px;height:146px;background:linear-gradient(to right,#D8D060 0.00%,#D8D060 16.67%,#F0E498 16.67%,#F0E498 33.33%,#E8E4A8 33.33%,#E8E4A8 50.00%,#D8D488 50.00%,#D8D488 66.67%,#C8BC60 66.67%,#C8BC60 83.33%,#B0A048 83.33%,#B0A048 100.00%)"></div>
<div class="r" style="left:536px;top:468px;width:6px;height:2px;background:linear-gradient(to right,#2060E0 0.00%,#2060E0 16.67%,#80A8F8 16.67%,#80A8F8 33.33%,#90A8E8 33.33%,#90A8E8 50.00%,#6080D8 50.00%,#6080D8 66.67%,#2050B8 66.67%,#2050B8 83.33%,#1040A0 83.33%,#1040A0 100.00%)"></div>
<div class="r" style="left:542px;top:468px;width:6px;height:2px;background:linear-gradient(to right,#20E8E0 0.00%,#20E8E0 16.67%,#80FFFF 16.67%,#80FFFF 33.33%,#98E8F0 33.33%,#98E8F0 50.00%,#60D0E0 50.00%,#60D0E0 66.67%,#20A8B8 66.67%,#20A8B8 83.33%,#109098 83.33%,#109098 100.00%)"></div>
<div class="r" style="left:548px;top:469px;width:6px;height:1px;background:linear-gradient(to right,#109050 0.00%,#109050 16.67%,#20B090 16.67%,#20B090 33.33%,#40A890 33.33%,#40A890 50.00%,#108070 50.00%,#108070 66.67%,#106040 66.67%,#106040 83.33%,#005030 83.33%,#005030 100.00%)"></div>
<div class="t" style="left:509.0px;top:477px;font-size:11.5px;line-height:11.5px;letter-spacing:0.288px;color:#000;width:60px;text-align:center;transform:scaleX(1.06);transform-origin:50% 0;">Apr</div>
<div class="t" style="left:509.0px;top:492px;font-size:11.5px;line-height:11.5px;letter-spacing:0.005px;color:#000;width:60px;text-align:center;transform:scaleX(1.06);transform-origin:50% 0;">2016</div>
<div class="r" style="left:558px;top:343px;width:6px;height:127px;background:linear-gradient(to right,#D88018 0.00%,#D88018 16.67%,#FFC070 16.67%,#FFC070 33.33%,#F0C088 33.33%,#F0C088 50.00%,#E0A060 50.00%,#E0A060 66.67%,#B87020 66.67%,#B87020 83.33%,#A05008 83.33%,#A05008 100.00%)"></div>
<div class="r" style="left:564px;top:324px;width:6px;height:146px;background:linear-gradient(to right,#D8D060 0.00%,#D8D060 16.67%,#F0E498 16.67%,#F0E498 33.33%,#E8E4A8 33.33%,#E8E4A8 50.00%,#D8D488 50.00%,#D8D488 66.67%,#C8BC60 66.67%,#C8BC60 83.33%,#B0A048 83.33%,#B0A048 100.00%)"></div>
<div class="r" style="left:570px;top:465px;width:6px;height:5px;background:linear-gradient(to right,#2060E0 0.00%,#2060E0 16.67%,#80A8F8 16.67%,#80A8F8 33.33%,#90A8E8 33.33%,#90A8E8 50.00%,#6080D8 50.00%,#6080D8 66.67%,#2050B8 66.67%,#2050B8 83.33%,#1040A0 83.33%,#1040A0 100.00%)"></div>
<div class="r" style="left:576px;top:458px;width:6px;height:12px;background:linear-gradient(to right,#20E8E0 0.00%,#20E8E0 16.67%,#80FFFF 16.67%,#80FFFF 33.33%,#98E8F0 33.33%,#98E8F0 50.00%,#60D0E0 50.00%,#60D0E0 66.67%,#20A8B8 66.67%,#20A8B8 83.33%,#109098 83.33%,#109098 100.00%)"></div>
<div class="r" style="left:582px;top:448px;width:6px;height:22px;background:linear-gradient(to right,#109050 0.00%,#109050 16.67%,#20B090 16.67%,#20B090 33.33%,#40A890 33.33%,#40A890 50.00%,#108070 50.00%,#108070 66.67%,#106040 66.67%,#106040 83.33%,#005030 83.33%,#005030 100.00%)"></div>
<div class="t" style="left:543.0px;top:477px;font-size:11.5px;line-height:11.5px;letter-spacing:0.288px;color:#000;width:60px;text-align:center;transform:scaleX(1.06);transform-origin:50% 0;">May</div>
<div class="t" style="left:543.0px;top:492px;font-size:11.5px;line-height:11.5px;letter-spacing:0.005px;color:#000;width:60px;text-align:center;transform:scaleX(1.06);transform-origin:50% 0;">2016</div>
<div class="r" style="left:592px;top:428px;width:6px;height:42px;background:linear-gradient(to right,#D88018 0.00%,#D88018 16.67%,#FFC070 16.67%,#FFC070 33.33%,#F0C088 33.33%,#F0C088 50.00%,#E0A060 50.00%,#E0A060 66.67%,#B87020 66.67%,#B87020 83.33%,#A05008 83.33%,#A05008 100.00%)"></div>
<div class="r" style="left:598px;top:425px;width:6px;height:45px;background:linear-gradient(to right,#D8D060 0.00%,#D8D060 16.67%,#F0E498 16.67%,#F0E498 33.33%,#E8E4A8 33.33%,#E8E4A8 50.00%,#D8D488 50.00%,#D8D488 66.67%,#C8BC60 66.67%,#C8BC60 83.33%,#B0A048 83.33%,#B0A048 100.00%)"></div>
<div class="r" style="left:604px;top:469px;width:6px;height:1px;background:linear-gradient(to right,#2060E0 0.00%,#2060E0 16.67%,#80A8F8 16.67%,#80A8F8 33.33%,#90A8E8 33.33%,#90A8E8 50.00%,#6080D8 50.00%,#6080D8 66.67%,#2050B8 66.67%,#2050B8 83.33%,#1040A0 83.33%,#1040A0 100.00%)"></div>
<div class="r" style="left:610px;top:469px;width:6px;height:1px;background:linear-gradient(to right,#20E8E0 0.00%,#20E8E0 16.67%,#80FFFF 16.67%,#80FFFF 33.33%,#98E8F0 33.33%,#98E8F0 50.00%,#60D0E0 50.00%,#60D0E0 66.67%,#20A8B8 66.67%,#20A8B8 83.33%,#109098 83.33%,#109098 100.00%)"></div>
<div class="r" style="left:616px;top:469px;width:6px;height:1px;background:linear-gradient(to right,#109050 0.00%,#109050 16.67%,#20B090 16.67%,#20B090 33.33%,#40A890 33.33%,#40A890 50.00%,#108070 50.00%,#108070 66.67%,#106040 66.67%,#106040 83.33%,#005030 83.33%,#005030 100.00%)"></div>
<div class="t" style="left:577.0px;top:477px;font-size:11.5px;line-height:11.5px;letter-spacing:0.288px;color:#000;width:60px;text-align:center;transform:scaleX(1.06);transform-origin:50% 0;">Jun</div>
<div class="t" style="left:577.0px;top:492px;font-size:11.5px;line-height:11.5px;letter-spacing:0.005px;color:#000;width:60px;text-align:center;transform:scaleX(1.06);transform-origin:50% 0;">2016</div>
<div class="r" style="left:626px;top:409px;width:6px;height:61px;background:linear-gradient(to right,#D88018 0.00%,#D88018 16.67%,#FFC070 16.67%,#FFC070 33.33%,#F0C088 33.33%,#F0C088 50.00%,#E0A060 50.00%,#E0A060 66.67%,#B87020 66.67%,#B87020 83.33%,#A05008 83.33%,#A05008 100.00%)"></div>
<div class="r" style="left:632px;top:406px;width:6px;height:64px;background:linear-gradient(to right,#D8D060 0.00%,#D8D060 16.67%,#F0E498 16.67%,#F0E498 33.33%,#E8E4A8 33.33%,#E8E4A8 50.00%,#D8D488 50.00%,#D8D488 66.67%,#C8BC60 66.67%,#C8BC60 83.33%,#B0A048 83.33%,#B0A048 100.00%)"></div>
<div class="r" style="left:638px;top:469px;width:6px;height:1px;background:linear-gradient(to right,#2060E0 0.00%,#2060E0 16.67%,#80A8F8 16.67%,#80A8F8 33.33%,#90A8E8 33.33%,#90A8E8 50.00%,#6080D8 50.00%,#6080D8 66.67%,#2050B8 66.67%,#2050B8 83.33%,#1040A0 83.33%,#1040A0 100.00%)"></div>
<div class="r" style="left:644px;top:469px;width:6px;height:1px;background:linear-gradient(to right,#20E8E0 0.00%,#20E8E0 16.67%,#80FFFF 16.67%,#80FFFF 33.33%,#98E8F0 33.33%,#98E8F0 50.00%,#60D0E0 50.00%,#60D0E0 66.67%,#20A8B8 66.67%,#20A8B8 83.33%,#109098 83.33%,#109098 100.00%)"></div>
<div class="r" style="left:650px;top:469px;width:6px;height:1px;background:linear-gradient(to right,#109050 0.00%,#109050 16.67%,#20B090 16.67%,#20B090 33.33%,#40A890 33.33%,#40A890 50.00%,#108070 50.00%,#108070 66.67%,#106040 66.67%,#106040 83.33%,#005030 83.33%,#005030 100.00%)"></div>
<div class="t" style="left:611.0px;top:477px;font-size:11.5px;line-height:11.5px;letter-spacing:0.288px;color:#000;width:60px;text-align:center;transform:scaleX(1.06);transform-origin:50% 0;">Jul</div>
<div class="t" style="left:611.0px;top:492px;font-size:11.5px;line-height:11.5px;letter-spacing:0.005px;color:#000;width:60px;text-align:center;transform:scaleX(1.06);transform-origin:50% 0;">2016</div>
<div class="r" style="left:660px;top:422px;width:6px;height:48px;background:linear-gradient(to right,#D88018 0.00%,#D88018 16.67%,#FFC070 16.67%,#FFC070 33.33%,#F0C088 33.33%,#F0C088 50.00%,#E0A060 50.00%,#E0A060 66.67%,#B87020 66.67%,#B87020 83.33%,#A05008 83.33%,#A05008 100.00%)"></div>
<div class="r" style="left:666px;top:422px;width:6px;height:48px;background:linear-gradient(to right,#D8D060 0.00%,#D8D060 16.67%,#F0E498 16.67%,#F0E498 33.33%,#E8E4A8 33.33%,#E8E4A8 50.00%,#D8D488 50.00%,#D8D488 66.67%,#C8BC60 66.67%,#C8BC60 83.33%,#B0A048 83.33%,#B0A048 100.00%)"></div>
<div class="r" style="left:672px;top:469px;width:6px;height:1px;background:linear-gradient(to right,#2060E0 0.00%,#2060E0 16.67%,#80A8F8 16.67%,#80A8F8 33.33%,#90A8E8 33.33%,#90A8E8 50.00%,#6080D8 50.00%,#6080D8 66.67%,#2050B8 66.67%,#2050B8 83.33%,#1040A0 83.33%,#1040A0 100.00%)"></div>
<div class="r" style="left:678px;top:469px;width:6px;height:1px;background:linear-gradient(to right,#20E8E0 0.00%,#20E8E0 16.67%,#80FFFF 16.67%,#80FFFF 33.33%,#98E8F0 33.33%,#98E8F0 50.00%,#60D0E0 50.00%,#60D0E0 66.67%,#20A8B8 66.67%,#20A8B8 83.33%,#109098 83.33%,#109098 100.00%)"></div>
<div class="r" style="left:684px;top:469px;width:6px;height:1px;background:linear-gradient(to right,#109050 0.00%,#109050 16.67%,#20B090 16.67%,#20B090 33.33%,#40A890 33.33%,#40A890 50.00%,#108070 50.00%,#108070 66.67%,#106040 66.67%,#106040 83.33%,#005030 83.33%,#005030 100.00%)"></div>
<div class="t" style="left:645.0px;top:477px;font-size:11.5px;line-height:11.5px;letter-spacing:0.288px;color:#000;width:60px;text-align:center;transform:scaleX(1.06);transform-origin:50% 0;">Aug</div>
<div class="t" style="left:645.0px;top:492px;font-size:11.5px;line-height:11.5px;letter-spacing:0.005px;color:#000;width:60px;text-align:center;transform:scaleX(1.06);transform-origin:50% 0;">2016</div>
<div class="r" style="left:694px;top:353px;width:6px;height:117px;background:linear-gradient(to right,#D88018 0.00%,#D88018 16.67%,#FFC070 16.67%,#FFC070 33.33%,#F0C088 33.33%,#F0C088 50.00%,#E0A060 50.00%,#E0A060 66.67%,#B87020 66.67%,#B87020 83.33%,#A05008 83.33%,#A05008 100.00%)"></div>
<div class="r" style="left:700px;top:353px;width:6px;height:117px;background:linear-gradient(to right,#D8D060 0.00%,#D8D060 16.67%,#F0E498 16.67%,#F0E498 33.33%,#E8E4A8 33.33%,#E8E4A8 50.00%,#D8D488 50.00%,#D8D488 66.67%,#C8BC60 66.67%,#C8BC60 83.33%,#B0A048 83.33%,#B0A048 100.00%)"></div>
<div class="r" style="left:706px;top:468px;width:6px;height:2px;background:linear-gradient(to right,#2060E0 0.00%,#2060E0 16.67%,#80A8F8 16.67%,#80A8F8 33.33%,#90A8E8 33.33%,#90A8E8 50.00%,#6080D8 50.00%,#6080D8 66.67%,#2050B8 66.67%,#2050B8 83.33%,#1040A0 83.33%,#1040A0 100.00%)"></div>
<div class="r" style="left:712px;top:468px;width:6px;height:2px;background:linear-gradient(to right,#20E8E0 0.00%,#20E8E0 16.67%,#80FFFF 16.67%,#80FFFF 33.33%,#98E8F0 33.33%,#98E8F0 50.00%,#60D0E0 50.00%,#60D0E0 66.67%,#20A8B8 66.67%,#20A8B8 83.33%,#109098 83.33%,#109098 100.00%)"></div>
<div class="r" style="left:718px;top:469px;width:6px;height:1px;background:linear-gradient(to right,#109050 0.00%,#109050 16.67%,#20B090 16.67%,#20B090 33.33%,#40A890 33.33%,#40A890 50.00%,#108070 50.00%,#108070 66.67%,#106040 66.67%,#106040 83.33%,#005030 83.33%,#005030 100.00%)"></div>
<div class="t" style="left:679.0px;top:477px;font-size:11.5px;line-height:11.5px;letter-spacing:0.288px;color:#000;width:60px;text-align:center;transform:scaleX(1.06);transform-origin:50% 0;">Sep</div>
<div class="t" style="left:679.0px;top:492px;font-size:11.5px;line-height:11.5px;letter-spacing:0.005px;color:#000;width:60px;text-align:center;transform:scaleX(1.06);transform-origin:50% 0;">2016</div>
<div class="r" style="left:728px;top:359px;width:6px;height:111px;background:linear-gradient(to right,#D88018 0.00%,#D88018 16.67%,#FFC070 16.67%,#FFC070 33.33%,#F0C088 33.33%,#F0C088 50.00%,#E0A060 50.00%,#E0A060 66.67%,#B87020 66.67%,#B87020 83.33%,#A05008 83.33%,#A05008 100.00%)"></div>
<div class="r" style="left:734px;top:327px;width:6px;height:143px;background:linear-gradient(to right,#D8D060 0.00%,#D8D060 16.67%,#F0E498 16.67%,#F0E498 33.33%,#E8E4A8 33.33%,#E8E4A8 50.00%,#D8D488 50.00%,#D8D488 66.67%,#C8BC60 66.67%,#C8BC60 83.33%,#B0A048 83.33%,#B0A048 100.00%)"></div>
<div class="r" style="left:740px;top:429px;width:6px;height:41px;background:linear-gradient(to right,#2060E0 0.00%,#2060E0 16.67%,#80A8F8 16.67%,#80A8F8 33.33%,#90A8E8 33.33%,#90A8E8 50.00%,#6080D8 50.00%,#6080D8 66.67%,#2050B8 66.67%,#2050B8 83.33%,#1040A0 83.33%,#1040A0 100.00%)"></div>
<div class="r" style="left:746px;top:289px;width:6px;height:181px;background:linear-gradient(to right,#20E8E0 0.00%,#20E8E0 16.67%,#80FFFF 16.67%,#80FFFF 33.33%,#98E8F0 33.33%,#98E8F0 50.00%,#60D0E0 50.00%,#60D0E0 66.67%,#20A8B8 66.67%,#20A8B8 83.33%,#109098 83.33%,#109098 100.00%)"></div>
<div class="r" style="left:752px;top:289px;width:6px;height:181px;background:linear-gradient(to right,#109050 0.00%,#109050 16.67%,#20B090 16.67%,#20B090 33.33%,#40A890 33.33%,#40A890 50.00%,#108070 50.00%,#108070 66.67%,#106040 66.67%,#106040 83.33%,#005030 83.33%,#005030 100.00%)"></div>
<div class="t" style="left:713.0px;top:477px;font-size:11.5px;line-height:11.5px;letter-spacing:0.288px;color:#000;width:60px;text-align:center;transform:scaleX(1.06);transform-origin:50% 0;">Oct</div>
<div class="t" style="left:713.0px;top:492px;font-size:11.5px;line-height:11.5px;letter-spacing:0.005px;color:#000;width:60px;text-align:center;transform:scaleX(1.06);transform-origin:50% 0;">2016</div>
<div class="r" style="left:763px;top:454px;width:6px;height:16px;background:linear-gradient(to right,#D88018 0.00%,#D88018 16.67%,#FFC070 16.67%,#FFC070 33.33%,#F0C088 33.33%,#F0C088 50.00%,#E0A060 50.00%,#E0A060 66.67%,#B87020 66.67%,#B87020 83.33%,#A05008 83.33%,#A05008 100.00%)"></div>
<div class="r" style="left:769px;top:432px;width:6px;height:38px;background:linear-gradient(to right,#D8D060 0.00%,#D8D060 16.67%,#F0E498 16.67%,#F0E498 33.33%,#E8E4A8 33.33%,#E8E4A8 50.00%,#D8D488 50.00%,#D8D488 66.67%,#C8BC60 66.67%,#C8BC60 83.33%,#B0A048 83.33%,#B0A048 100.00%)"></div>
<div class="r" style="left:775px;top:433px;width:6px;height:37px;background:linear-gradient(to right,#2060E0 0.00%,#2060E0 16.67%,#80A8F8 16.67%,#80A8F8 33.33%,#90A8E8 33.33%,#90A8E8 50.00%,#6080D8 50.00%,#6080D8 66.67%,#2050B8 66.67%,#2050B8 83.33%,#1040A0 83.33%,#1040A0 100.00%)"></div>
<div class="r" style="left:781px;top:353px;width:6px;height:117px;background:linear-gradient(to right,#20E8E0 0.00%,#20E8E0 16.67%,#80FFFF 16.67%,#80FFFF 33.33%,#98E8F0 33.33%,#98E8F0 50.00%,#60D0E0 50.00%,#60D0E0 66.67%,#20A8B8 66.67%,#20A8B8 83.33%,#109098 83.33%,#109098 100.00%)"></div>
<div class="r" style="left:787px;top:292px;width:6px;height:178px;background:linear-gradient(to right,#109050 0.00%,#109050 16.67%,#20B090 16.67%,#20B090 33.33%,#40A890 33.33%,#40A890 50.00%,#108070 50.00%,#108070 66.67%,#106040 66.67%,#106040 83.33%,#005030 83.33%,#005030 100.00%)"></div>
<div class="t" style="left:748.0px;top:477px;font-size:11.5px;line-height:11.5px;letter-spacing:0.509px;color:#000;font-weight:bold;width:60px;text-align:center;transform:scaleX(1.06);transform-origin:50% 0;">Nov</div>
<div class="t" style="left:748.0px;top:492px;font-size:11.5px;line-height:11.5px;letter-spacing:0.367px;color:#000;font-weight:bold;width:60px;text-align:center;transform:scaleX(1.06);transform-origin:50% 0;">2016</div>
<div class="r" style="left:798px;top:469px;width:6px;height:1px;background:linear-gradient(to right,#D88018 0.00%,#D88018 16.67%,#FFC070 16.67%,#FFC070 33.33%,#F0C088 33.33%,#F0C088 50.00%,#E0A060 50.00%,#E0A060 66.67%,#B87020 66.67%,#B87020 83.33%,#A05008 83.33%,#A05008 100.00%)"></div>
<div class="r" style="left:804px;top:469px;width:6px;height:1px;background:linear-gradient(to right,#D8D060 0.00%,#D8D060 16.67%,#F0E498 16.67%,#F0E498 33.33%,#E8E4A8 33.33%,#E8E4A8 50.00%,#D8D488 50.00%,#D8D488 66.67%,#C8BC60 66.67%,#C8BC60 83.33%,#B0A048 83.33%,#B0A048 100.00%)"></div>
<div class="r" style="left:810px;top:469px;width:6px;height:1px;background:linear-gradient(to right,#2060E0 0.00%,#2060E0 16.67%,#80A8F8 16.67%,#80A8F8 33.33%,#90A8E8 33.33%,#90A8E8 50.00%,#6080D8 50.00%,#6080D8 66.67%,#2050B8 66.67%,#2050B8 83.33%,#1040A0 83.33%,#1040A0 100.00%)"></div>
<div class="r" style="left:816px;top:469px;width:6px;height:1px;background:linear-gradient(to right,#20E8E0 0.00%,#20E8E0 16.67%,#80FFFF 16.67%,#80FFFF 33.33%,#98E8F0 33.33%,#98E8F0 50.00%,#60D0E0 50.00%,#60D0E0 66.67%,#20A8B8 66.67%,#20A8B8 83.33%,#109098 83.33%,#109098 100.00%)"></div>
<div class="r" style="left:822px;top:469px;width:6px;height:1px;background:linear-gradient(to right,#109050 0.00%,#109050 16.67%,#20B090 16.67%,#20B090 33.33%,#40A890 33.33%,#40A890 50.00%,#108070 50.00%,#108070 66.67%,#106040 66.67%,#106040 83.33%,#005030 83.33%,#005030 100.00%)"></div>
<div class="t" style="left:783.0px;top:477px;font-size:11.5px;line-height:11.5px;letter-spacing:0.288px;color:#000;width:60px;text-align:center;transform:scaleX(1.06);transform-origin:50% 0;">Dec</div>
<div class="t" style="left:783.0px;top:492px;font-size:11.5px;line-height:11.5px;letter-spacing:0.005px;color:#000;width:60px;text-align:center;transform:scaleX(1.06);transform-origin:50% 0;">2016</div>
<div class="r" style="left:374px;top:524px;width:82px;height:32px;background:#ECECEC;"></div>
<div class="t" style="left:355.0px;top:536px;font-size:11.5px;line-height:11.5px;letter-spacing:0.288px;color:#000;width:120px;text-align:center;transform:scaleX(1.06);transform-origin:50% 0;">Month</div>
<div class="r" style="left:458px;top:524px;width:82px;height:32px;background:#FF9933;"></div>
<div class="t" style="left:439.0px;top:528px;font-size:11.5px;line-height:11.5px;letter-spacing:0.288px;color:#000;width:120px;text-align:center;transform:scaleX(1.06);transform-origin:50% 0;">Unique</div>
<div class="t" style="left:439.0px;top:543px;font-size:11.5px;line-height:11.5px;letter-spacing:0.288px;color:#000;width:120px;text-align:center;transform:scaleX(1.06);transform-origin:50% 0;">visitors</div>
<div class="r" style="left:542px;top:524px;width:82px;height:32px;background:#F3F300;"></div>
<div class="t" style="left:523.0px;top:528px;font-size:11.5px;line-height:11.5px;letter-spacing:0.288px;color:#000;width:120px;text-align:center;transform:scaleX(1.06);transform-origin:50% 0;">Number of</div>
<div class="t" style="left:523.0px;top:543px;font-size:11.5px;line-height:11.5px;letter-spacing:0.288px;color:#000;width:120px;text-align:center;transform:scaleX(1.06);transform-origin:50% 0;">visits</div>
<div class="r" style="left:626px;top:524px;width:82px;height:32px;background:#4477DD;"></div>
<div class="t" style="left:607.0px;top:536px;font-size:11.5px;line-height:11.5px;letter-spacing:0.288px;color:#000;width:120px;text-align:center;transform:scaleX(1.06);transform-origin:50% 0;">Pages</div>
<div class="r" style="left:710px;top:524px;width:82px;height:32px;background:#66EEFF;"></div>
<div class="t" style="left:691.0px;top:536px;font-size:11.5px;line-height:11.5px;letter-spacing:0.288px;color:#000;width:120px;text-align:center;transform:scaleX(1.06);transform-origin:50% 0;">Hits</div>
<div class="r" style="left:794px;top:524px;width:82px;height:32px;background:#339944;"></div>
<div class="t" style="left:775.0px;top:536px;font-size:11.5px;line-height:11.5px;letter-spacing:0.288px;color:#000;width:120px;text-align:center;transform:scaleX(1.06);transform-origin:50% 0;">Bandwidth</div>
<div class="t" style="left:355.0px;top:562px;font-size:11.5px;line-height:11.5px;letter-spacing:0.288px;color:#000;width:120px;text-align:center;transform:scaleX(1.06);transform-origin:50% 0;">Jan 2016</div>
<div class="t" style="left:439.0px;top:562px;font-size:11.5px;line-height:11.5px;letter-spacing:0.288px;color:#000;width:120px;text-align:center;transform:scaleX(1.06);transform-origin:50% 0;">0</div>
<div class="t" style="left:523.0px;top:562px;font-size:11.5px;line-height:11.5px;letter-spacing:0.288px;color:#000;width:120px;text-align:center;transform:scaleX(1.06);transform-origin:50% 0;">0</div>
<div class="t" style="left:607.0px;top:562px;font-size:11.5px;line-height:11.5px;letter-spacing:0.288px;color:#000;width:120px;text-align:center;transform:scaleX(1.06);transform-origin:50% 0;">0</div>
<div class="t" style="left:691.0px;top:562px;font-size:11.5px;line-height:11.5px;letter-spacing:0.288px;color:#000;width:120px;text-align:center;transform:scaleX(1.06);transform-origin:50% 0;">0</div>
<div class="t" style="left:775.0px;top:562px;font-size:11.5px;line-height:11.5px;letter-spacing:0.288px;color:#000;width:120px;text-align:center;transform:scaleX(1.06);transform-origin:50% 0;">0</div>
<div class="t" style="left:355.0px;top:581px;font-size:11.5px;line-height:11.5px;letter-spacing:0.288px;color:#000;width:120px;text-align:center;transform:scaleX(1.06);transform-origin:50% 0;">Feb 2016</div>
<div class="t" style="left:439.0px;top:581px;font-size:11.5px;line-height:11.5px;letter-spacing:0.288px;color:#000;width:120px;text-align:center;transform:scaleX(1.06);transform-origin:50% 0;">37</div>
<div class="t" style="left:523.0px;top:581px;font-size:11.5px;line-height:11.5px;letter-spacing:0.288px;color:#000;width:120px;text-align:center;transform:scaleX(1.06);transform-origin:50% 0;">41</div>
<div class="t" style="left:607.0px;top:581px;font-size:11.5px;line-height:11.5px;letter-spacing:0.288px;color:#000;width:120px;text-align:center;transform:scaleX(1.06);transform-origin:50% 0;">62</div>
<div class="t" style="left:691.0px;top:581px;font-size:11.5px;line-height:11.5px;letter-spacing:0.288px;color:#000;width:120px;text-align:center;transform:scaleX(1.06);transform-origin:50% 0;">62</div>
<div class="t" style="left:775.0px;top:581px;font-size:11.5px;line-height:11.5px;letter-spacing:0.288px;color:#000;width:120px;text-align:center;transform:scaleX(1.06);transform-origin:50% 0;">12.29 KB</div>
<div class="t" style="left:355.0px;top:600px;font-size:11.5px;line-height:11.5px;letter-spacing:0.288px;color:#000;width:120px;text-align:center;transform:scaleX(1.06);transform-origin:50% 0;">Mar 2016</div>
<div class="t" style="left:439.0px;top:600px;font-size:11.5px;line-height:11.5px;letter-spacing:0.288px;color:#000;width:120px;text-align:center;transform:scaleX(1.06);transform-origin:50% 0;">50</div>
<div class="t" style="left:523.0px;top:600px;font-size:11.5px;line-height:11.5px;letter-spacing:0.288px;color:#000;width:120px;text-align:center;transform:scaleX(1.06);transform-origin:50% 0;">57</div>
<div class="t" style="left:607.0px;top:600px;font-size:11.5px;line-height:11.5px;letter-spacing:0.288px;color:#000;width:120px;text-align:center;transform:scaleX(1.06);transform-origin:50% 0;">87</div>
<div class="t" style="left:691.0px;top:600px;font-size:11.5px;line-height:11.5px;letter-spacing:0.288px;color:#000;width:120px;text-align:center;transform:scaleX(1.06);transform-origin:50% 0;">87</div>
<div class="t" style="left:775.0px;top:600px;font-size:11.5px;line-height:11.5px;letter-spacing:0.288px;color:#000;width:120px;text-align:center;transform:scaleX(1.06);transform-origin:50% 0;">17.25 KB</div>
<div class="t" style="left:355.0px;top:619px;font-size:11.5px;line-height:11.5px;letter-spacing:0.288px;color:#000;width:120px;text-align:center;transform:scaleX(1.06);transform-origin:50% 0;">Apr 2016</div>
<div class="t" style="left:439.0px;top:619px;font-size:11.5px;line-height:11.5px;letter-spacing:0.288px;color:#000;width:120px;text-align:center;transform:scaleX(1.06);transform-origin:50% 0;">37</div>
<div class="t" style="left:523.0px;top:619px;font-size:11.5px;line-height:11.5px;letter-spacing:0.288px;color:#000;width:120px;text-align:center;transform:scaleX(1.06);transform-origin:50% 0;">46</div>
<div class="t" style="left:607.0px;top:619px;font-size:11.5px;line-height:11.5px;letter-spacing:0.288px;color:#000;width:120px;text-align:center;transform:scaleX(1.06);transform-origin:50% 0;">79</div>
<div class="t" style="left:691.0px;top:619px;font-size:11.5px;line-height:11.5px;letter-spacing:0.288px;color:#000;width:120px;text-align:center;transform:scaleX(1.06);transform-origin:50% 0;">79</div>
<div class="t" style="left:775.0px;top:619px;font-size:11.5px;line-height:11.5px;letter-spacing:0.288px;color:#000;width:120px;text-align:center;transform:scaleX(1.06);transform-origin:50% 0;">15.66 KB</div>
<div class="t" style="left:355.0px;top:638px;font-size:11.5px;line-height:11.5px;letter-spacing:0.288px;color:#000;width:120px;text-align:center;transform:scaleX(1.06);transform-origin:50% 0;">May 2016</div>
<div class="t" style="left:439.0px;top:638px;font-size:11.5px;line-height:11.5px;letter-spacing:0.288px;color:#000;width:120px;text-align:center;transform:scaleX(1.06);transform-origin:50% 0;">40</div>
<div class="t" style="left:523.0px;top:638px;font-size:11.5px;line-height:11.5px;letter-spacing:0.288px;color:#000;width:120px;text-align:center;transform:scaleX(1.06);transform-origin:50% 0;">46</div>
<div class="t" style="left:607.0px;top:638px;font-size:11.5px;line-height:11.5px;letter-spacing:0.288px;color:#000;width:120px;text-align:center;transform:scaleX(1.06);transform-origin:50% 0;">256</div>
<div class="t" style="left:691.0px;top:638px;font-size:11.5px;line-height:11.5px;letter-spacing:0.288px;color:#000;width:120px;text-align:center;transform:scaleX(1.06);transform-origin:50% 0;">614</div>
<div class="t" style="left:775.0px;top:638px;font-size:11.5px;line-height:11.5px;letter-spacing:0.288px;color:#000;width:120px;text-align:center;transform:scaleX(1.06);transform-origin:50% 0;">20.23 MB</div>
<div class="t" style="left:355.0px;top:657px;font-size:11.5px;line-height:11.5px;letter-spacing:0.288px;color:#000;width:120px;text-align:center;transform:scaleX(1.06);transform-origin:50% 0;">Jun 2016</div>
<div class="t" style="left:439.0px;top:657px;font-size:11.5px;line-height:11.5px;letter-spacing:0.288px;color:#000;width:120px;text-align:center;transform:scaleX(1.06);transform-origin:50% 0;">13</div>
<div class="t" style="left:523.0px;top:657px;font-size:11.5px;line-height:11.5px;letter-spacing:0.288px;color:#000;width:120px;text-align:center;transform:scaleX(1.06);transform-origin:50% 0;">14</div>
<div class="t" style="left:607.0px;top:657px;font-size:11.5px;line-height:11.5px;letter-spacing:0.288px;color:#000;width:120px;text-align:center;transform:scaleX(1.06);transform-origin:50% 0;">40</div>
<div class="t" style="left:691.0px;top:657px;font-size:11.5px;line-height:11.5px;letter-spacing:0.288px;color:#000;width:120px;text-align:center;transform:scaleX(1.06);transform-origin:50% 0;">40</div>
<div class="t" style="left:775.0px;top:657px;font-size:11.5px;line-height:11.5px;letter-spacing:0.288px;color:#000;width:120px;text-align:center;transform:scaleX(1.06);transform-origin:50% 0;">13.76 KB</div>
<div class="t" style="left:355.0px;top:676px;font-size:11.5px;line-height:11.5px;letter-spacing:0.288px;color:#000;width:120px;text-align:center;transform:scaleX(1.06);transform-origin:50% 0;">Jul 2016</div>
<div class="t" style="left:439.0px;top:676px;font-size:11.5px;line-height:11.5px;letter-spacing:0.288px;color:#000;width:120px;text-align:center;transform:scaleX(1.06);transform-origin:50% 0;">19</div>
<div class="t" style="left:523.0px;top:676px;font-size:11.5px;line-height:11.5px;letter-spacing:0.288px;color:#000;width:120px;text-align:center;transform:scaleX(1.06);transform-origin:50% 0;">20</div>
<div class="t" style="left:607.0px;top:676px;font-size:11.5px;line-height:11.5px;letter-spacing:0.288px;color:#000;width:120px;text-align:center;transform:scaleX(1.06);transform-origin:50% 0;">39</div>
<div class="t" style="left:691.0px;top:676px;font-size:11.5px;line-height:11.5px;letter-spacing:0.288px;color:#000;width:120px;text-align:center;transform:scaleX(1.06);transform-origin:50% 0;">39</div>
<div class="t" style="left:775.0px;top:676px;font-size:11.5px;line-height:11.5px;letter-spacing:0.288px;color:#000;width:120px;text-align:center;transform:scaleX(1.06);transform-origin:50% 0;">14.54 KB</div>
<div class="t" style="left:355.0px;top:695px;font-size:11.5px;line-height:11.5px;letter-spacing:0.288px;color:#000;width:120px;text-align:center;transform:scaleX(1.06);transform-origin:50% 0;">Aug 2016</div>
<div class="t" style="left:439.0px;top:695px;font-size:11.5px;line-height:11.5px;letter-spacing:0.288px;color:#000;width:120px;text-align:center;transform:scaleX(1.06);transform-origin:50% 0;">15</div>
<div class="t" style="left:523.0px;top:695px;font-size:11.5px;line-height:11.5px;letter-spacing:0.288px;color:#000;width:120px;text-align:center;transform:scaleX(1.06);transform-origin:50% 0;">15</div>
<div class="t" style="left:607.0px;top:695px;font-size:11.5px;line-height:11.5px;letter-spacing:0.288px;color:#000;width:120px;text-align:center;transform:scaleX(1.06);transform-origin:50% 0;">31</div>
<div class="t" style="left:691.0px;top:695px;font-size:11.5px;line-height:11.5px;letter-spacing:0.288px;color:#000;width:120px;text-align:center;transform:scaleX(1.06);transform-origin:50% 0;">31</div>
<div class="t" style="left:775.0px;top:695px;font-size:11.5px;line-height:11.5px;letter-spacing:0.288px;color:#000;width:120px;text-align:center;transform:scaleX(1.06);transform-origin:50% 0;">12.26 KB</div>
<div class="t" style="left:355.0px;top:714px;font-size:11.5px;line-height:11.5px;letter-spacing:0.288px;color:#000;width:120px;text-align:center;transform:scaleX(1.06);transform-origin:50% 0;">Sep 2016</div>
<div class="t" style="left:439.0px;top:714px;font-size:11.5px;line-height:11.5px;letter-spacing:0.288px;color:#000;width:120px;text-align:center;transform:scaleX(1.06);transform-origin:50% 0;">37</div>
<div class="t" style="left:523.0px;top:714px;font-size:11.5px;line-height:11.5px;letter-spacing:0.288px;color:#000;width:120px;text-align:center;transform:scaleX(1.06);transform-origin:50% 0;">37</div>
<div class="t" style="left:607.0px;top:714px;font-size:11.5px;line-height:11.5px;letter-spacing:0.288px;color:#000;width:120px;text-align:center;transform:scaleX(1.06);transform-origin:50% 0;">66</div>
<div class="t" style="left:691.0px;top:714px;font-size:11.5px;line-height:11.5px;letter-spacing:0.288px;color:#000;width:120px;text-align:center;transform:scaleX(1.06);transform-origin:50% 0;">66</div>
<div class="t" style="left:775.0px;top:714px;font-size:11.5px;line-height:11.5px;letter-spacing:0.288px;color:#000;width:120px;text-align:center;transform:scaleX(1.06);transform-origin:50% 0;">28.03 KB</div>
<div class="t" style="left:355.0px;top:733px;font-size:11.5px;line-height:11.5px;letter-spacing:0.288px;color:#000;width:120px;text-align:center;transform:scaleX(1.06);transform-origin:50% 0;">Oct 2016</div>
<div class="t" style="left:439.0px;top:733px;font-size:11.5px;line-height:11.5px;letter-spacing:0.288px;color:#000;width:120px;text-align:center;transform:scaleX(1.06);transform-origin:50% 0;">35</div>
<div class="t" style="left:523.0px;top:733px;font-size:11.5px;line-height:11.5px;letter-spacing:0.288px;color:#000;width:120px;text-align:center;transform:scaleX(1.06);transform-origin:50% 0;">45</div>
<div class="t" style="left:607.0px;top:733px;font-size:11.5px;line-height:11.5px;letter-spacing:0.288px;color:#000;width:120px;text-align:center;transform:scaleX(1.06);transform-origin:50% 0;">2,105</div>
<div class="t" style="left:691.0px;top:733px;font-size:11.5px;line-height:11.5px;letter-spacing:0.288px;color:#000;width:120px;text-align:center;transform:scaleX(1.06);transform-origin:50% 0;">9,471</div>
<div class="t" style="left:775.0px;top:733px;font-size:11.5px;line-height:11.5px;letter-spacing:0.288px;color:#000;width:120px;text-align:center;transform:scaleX(1.06);transform-origin:50% 0;">167.82 MB</div>
<div class="t" style="left:355.0px;top:750px;font-size:11.5px;line-height:11.5px;letter-spacing:0.603px;color:#000;font-weight:bold;width:120px;text-align:center;transform:scaleX(1.06);transform-origin:50% 0;">Nov 2016</div>
<div class="t" style="left:439.0px;top:750px;font-size:11.5px;line-height:11.5px;letter-spacing:0.288px;color:#000;width:120px;text-align:center;transform:scaleX(1.06);transform-origin:50% 0;">5</div>
<div class="t" style="left:523.0px;top:750px;font-size:11.5px;line-height:11.5px;letter-spacing:0.288px;color:#000;width:120px;text-align:center;transform:scaleX(1.06);transform-origin:50% 0;">12</div>
<div class="t" style="left:607.0px;top:750px;font-size:11.5px;line-height:11.5px;letter-spacing:0.288px;color:#000;width:120px;text-align:center;transform:scaleX(1.06);transform-origin:50% 0;">1,911</div>
<div class="t" style="left:691.0px;top:750px;font-size:11.5px;line-height:11.5px;letter-spacing:0.288px;color:#000;width:120px;text-align:center;transform:scaleX(1.06);transform-origin:50% 0;">6,144</div>
<div class="t" style="left:775.0px;top:750px;font-size:11.5px;line-height:11.5px;letter-spacing:0.288px;color:#000;width:120px;text-align:center;transform:scaleX(1.06);transform-origin:50% 0;">165.48 MB</div>
<div class="t" style="left:355.0px;top:769px;font-size:11.5px;line-height:11.5px;letter-spacing:0.288px;color:#000;width:120px;text-align:center;transform:scaleX(1.06);transform-origin:50% 0;">Dec 2016</div>
<div class="t" style="left:439.0px;top:769px;font-size:11.5px;line-height:11.5px;letter-spacing:0.288px;color:#000;width:120px;text-align:center;transform:scaleX(1.06);transform-origin:50% 0;">0</div>
<div class="t" style="left:523.0px;top:769px;font-size:11.5px;line-height:11.5px;letter-spacing:0.288px;color:#000;width:120px;text-align:center;transform:scaleX(1.06);transform-origin:50% 0;">0</div>
<div class="t" style="left:607.0px;top:769px;font-size:11.5px;line-height:11.5px;letter-spacing:0.288px;color:#000;width:120px;text-align:center;transform:scaleX(1.06);transform-origin:50% 0;">0</div>
<div class="t" style="left:691.0px;top:769px;font-size:11.5px;line-height:11.5px;letter-spacing:0.288px;color:#000;width:120px;text-align:center;transform:scaleX(1.06);transform-origin:50% 0;">0</div>
<div class="t" style="left:775.0px;top:769px;font-size:11.5px;line-height:11.5px;letter-spacing:0.288px;color:#000;width:120px;text-align:center;transform:scaleX(1.06);transform-origin:50% 0;">0</div>
<div class="r" style="left:374px;top:784px;width:82px;height:18px;background:#ECECEC;"></div>
<div class="r" style="left:458px;top:784px;width:82px;height:18px;background:#ECECEC;"></div>
<div class="r" style="left:542px;top:784px;width:82px;height:18px;background:#ECECEC;"></div>
<div class="r" style="left:626px;top:784px;width:82px;height:18px;background:#ECECEC;"></div>
<div class="r" style="left:710px;top:784px;width:82px;height:18px;background:#ECECEC;"></div>
<div class="r" style="left:794px;top:784px;width:82px;height:18px;background:#ECECEC;"></div>
<div class="t" style="left:355.0px;top:788px;font-size:11.5px;line-height:11.5px;letter-spacing:0.288px;color:#000;width:120px;text-align:center;transform:scaleX(1.06);transform-origin:50% 0;">Total</div>
<div class="t" style="left:439.0px;top:788px;font-size:11.5px;line-height:11.5px;letter-spacing:0.288px;color:#000;width:120px;text-align:center;transform:scaleX(1.06);transform-origin:50% 0;">288</div>
<div class="t" style="left:523.0px;top:788px;font-size:11.5px;line-height:11.5px;letter-spacing:0.288px;color:#000;width:120px;text-align:center;transform:scaleX(1.06);transform-origin:50% 0;">333</div>
<div class="t" style="left:607.0px;top:788px;font-size:11.5px;line-height:11.5px;letter-spacing:0.288px;color:#000;width:120px;text-align:center;transform:scaleX(1.06);transform-origin:50% 0;">4,676</div>
<div class="t" style="left:691.0px;top:788px;font-size:11.5px;line-height:11.5px;letter-spacing:0.288px;color:#000;width:120px;text-align:center;transform:scaleX(1.06);transform-origin:50% 0;">16,633</div>
<div class="t" style="left:775.0px;top:788px;font-size:11.5px;line-height:11.5px;letter-spacing:0.288px;color:#000;width:120px;text-align:center;transform:scaleX(1.06);transform-origin:50% 0;">353.64 MB</div>
</body></html>
